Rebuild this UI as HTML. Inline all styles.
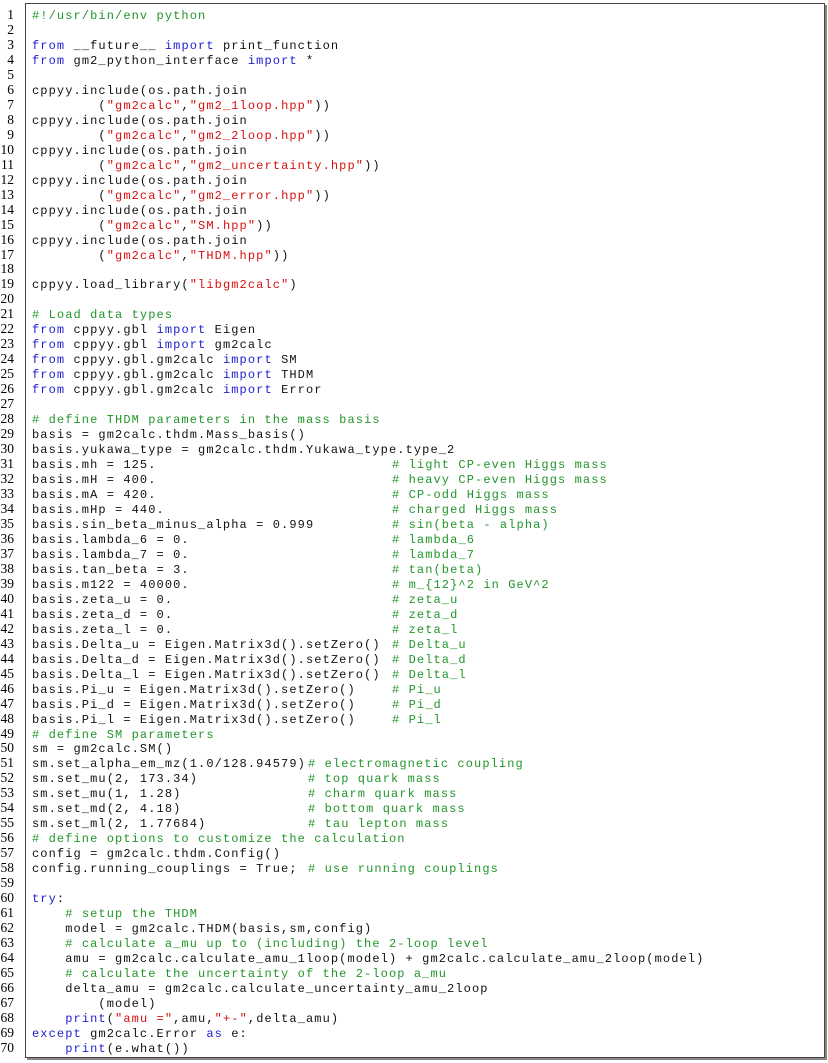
<!DOCTYPE html>
<html><head><meta charset="utf-8"><style>
html,body{margin:0;padding:0;background:#fff;width:828px;height:1063px;overflow:hidden}
.box{position:absolute;left:25px;top:3px;width:798px;height:1053px;border:1px solid #444;box-shadow:2px 2px 0 #888}
.nums{position:absolute;left:0;top:8px;width:14px;text-align:right;font-family:"Liberation Serif",serif;font-size:13.5px;line-height:14.97px;color:#000}
.code{position:absolute;left:32px;top:9px;width:790px;font-family:"Liberation Mono",monospace;font-size:12px;letter-spacing:1.1px;line-height:14.97px;color:#111}
.code div{position:relative;height:14.97px;white-space:pre}
.nums div{height:14.97px}
.k{color:#2020d0}.g{color:#22952a}.s{color:#d81010}
.a{position:absolute;left:360px;top:0}.b{position:absolute;left:276px;top:0}
</style></head><body>
<div class="box"></div>
<div class="nums">
<div>1</div><div>2</div><div>3</div><div>4</div><div>5</div><div>6</div><div>7</div><div>8</div><div>9</div><div>10</div>
<div>11</div><div>12</div><div>13</div><div>14</div><div>15</div><div>16</div><div>17</div><div>18</div><div>19</div><div>20</div>
<div>21</div><div>22</div><div>23</div><div>24</div><div>25</div><div>26</div><div>27</div><div>28</div><div>29</div><div>30</div>
<div>31</div><div>32</div><div>33</div><div>34</div><div>35</div><div>36</div><div>37</div><div>38</div><div>39</div><div>40</div>
<div>41</div><div>42</div><div>43</div><div>44</div><div>45</div><div>46</div><div>47</div><div>48</div><div>49</div><div>50</div>
<div>51</div><div>52</div><div>53</div><div>54</div><div>55</div><div>56</div><div>57</div><div>58</div><div>59</div><div>60</div>
<div>61</div><div>62</div><div>63</div><div>64</div><div>65</div><div>66</div><div>67</div><div>68</div><div>69</div><div>70</div>
</div>
<div class="code">
<div><span class="g">#!/usr/bin/env python</span></div>
<div> </div>
<div><span class="k">from</span> __future__ <span class="k">import</span> print_function</div>
<div><span class="k">from</span> gm2_python_interface <span class="k">import</span> *</div>
<div> </div>
<div>cppyy.include(os.path.join</div>
<div>        (<span class="s">"gm2calc"</span>,<span class="s">"gm2_1loop.hpp"</span>))</div>
<div>cppyy.include(os.path.join</div>
<div>        (<span class="s">"gm2calc"</span>,<span class="s">"gm2_2loop.hpp"</span>))</div>
<div>cppyy.include(os.path.join</div>
<div>        (<span class="s">"gm2calc"</span>,<span class="s">"gm2_uncertainty.hpp"</span>))</div>
<div>cppyy.include(os.path.join</div>
<div>        (<span class="s">"gm2calc"</span>,<span class="s">"gm2_error.hpp"</span>))</div>
<div>cppyy.include(os.path.join</div>
<div>        (<span class="s">"gm2calc"</span>,<span class="s">"SM.hpp"</span>))</div>
<div>cppyy.include(os.path.join</div>
<div>        (<span class="s">"gm2calc"</span>,<span class="s">"THDM.hpp"</span>))</div>
<div> </div>
<div>cppyy.load_library(<span class="s">"libgm2calc"</span>)</div>
<div> </div>
<div><span class="g"># Load data types</span></div>
<div><span class="k">from</span> cppyy.gbl <span class="k">import</span> Eigen</div>
<div><span class="k">from</span> cppyy.gbl <span class="k">import</span> gm2calc</div>
<div><span class="k">from</span> cppyy.gbl.gm2calc <span class="k">import</span> SM</div>
<div><span class="k">from</span> cppyy.gbl.gm2calc <span class="k">import</span> THDM</div>
<div><span class="k">from</span> cppyy.gbl.gm2calc <span class="k">import</span> Error</div>
<div> </div>
<div><span class="g"># define THDM parameters in the mass basis</span></div>
<div>basis = gm2calc.thdm.Mass_basis()</div>
<div>basis.yukawa_type = gm2calc.thdm.Yukawa_type.type_2</div>
<div>basis.mh = 125.<span class="g a"># light CP-even Higgs mass</span></div>
<div>basis.mH = 400.<span class="g a"># heavy CP-even Higgs mass</span></div>
<div>basis.mA = 420.<span class="g a"># CP-odd Higgs mass</span></div>
<div>basis.mHp = 440.<span class="g a"># charged Higgs mass</span></div>
<div>basis.sin_beta_minus_alpha = 0.999<span class="g a"># sin(beta - alpha)</span></div>
<div>basis.lambda_6 = 0.<span class="g a"># lambda_6</span></div>
<div>basis.lambda_7 = 0.<span class="g a"># lambda_7</span></div>
<div>basis.tan_beta = 3.<span class="g a"># tan(beta)</span></div>
<div>basis.m122 = 40000.<span class="g a"># m_{12}^2 in GeV^2</span></div>
<div>basis.zeta_u = 0.<span class="g a"># zeta_u</span></div>
<div>basis.zeta_d = 0.<span class="g a"># zeta_d</span></div>
<div>basis.zeta_l = 0.<span class="g a"># zeta_l</span></div>
<div>basis.Delta_u = Eigen.Matrix3d().setZero()<span class="g a"># Delta_u</span></div>
<div>basis.Delta_d = Eigen.Matrix3d().setZero()<span class="g a"># Delta_d</span></div>
<div>basis.Delta_l = Eigen.Matrix3d().setZero()<span class="g a"># Delta_l</span></div>
<div>basis.Pi_u = Eigen.Matrix3d().setZero()<span class="g a"># Pi_u</span></div>
<div>basis.Pi_d = Eigen.Matrix3d().setZero()<span class="g a"># Pi_d</span></div>
<div>basis.Pi_l = Eigen.Matrix3d().setZero()<span class="g a"># Pi_l</span></div>
<div><span class="g"># define SM parameters</span></div>
<div>sm = gm2calc.SM()</div>
<div>sm.set_alpha_em_mz(1.0/128.94579)<span class="g b"># electromagnetic coupling</span></div>
<div>sm.set_mu(2, 173.34)<span class="g b"># top quark mass</span></div>
<div>sm.set_mu(1, 1.28)<span class="g b"># charm quark mass</span></div>
<div>sm.set_md(2, 4.18)<span class="g b"># bottom quark mass</span></div>
<div>sm.set_ml(2, 1.77684)<span class="g b"># tau lepton mass</span></div>
<div><span class="g"># define options to customize the calculation</span></div>
<div>config = gm2calc.thdm.Config()</div>
<div>config.running_couplings = True;<span class="g b"># use running couplings</span></div>
<div> </div>
<div><span class="k">try</span>:</div>
<div>    <span class="g"># setup the THDM</span></div>
<div>    model = gm2calc.THDM(basis,sm,config)</div>
<div>    <span class="g"># calculate a_mu up to (including) the 2-loop level</span></div>
<div>    amu = gm2calc.calculate_amu_1loop(model) + gm2calc.calculate_amu_2loop(model)</div>
<div>    <span class="g"># calculate the uncertainty of the 2-loop a_mu</span></div>
<div>    delta_amu = gm2calc.calculate_uncertainty_amu_2loop</div>
<div>        (model)</div>
<div>    <span class="k">print</span>(<span class="s">"amu ="</span>,amu,<span class="s">"+-"</span>,delta_amu)</div>
<div><span class="k">except</span> gm2calc.Error <span class="k">as</span> e:</div>
<div>    <span class="k">print</span>(e.what())</div>
</div>
</body></html>
